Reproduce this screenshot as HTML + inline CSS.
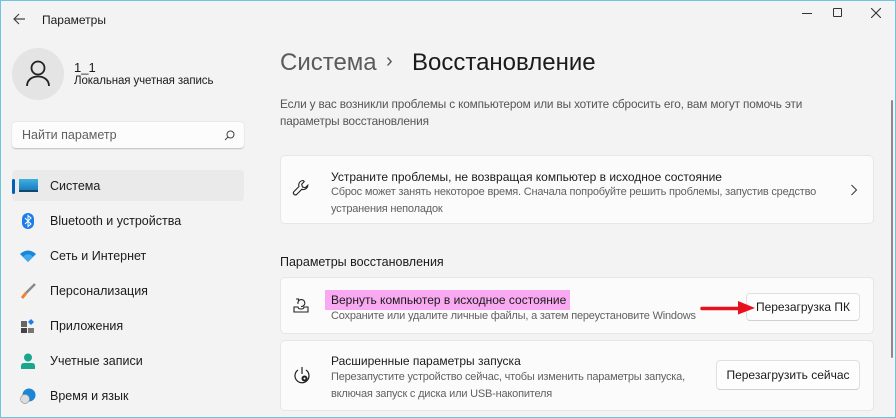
<!DOCTYPE html>
<html><head><meta charset="utf-8"><style>
*{box-sizing:border-box;margin:0;padding:0}
body{width:896px;height:418px;overflow:hidden;background:#f3f3f3;font-family:"Liberation Sans","Noto Sans CJK SC",sans-serif;color:#1b1b1b;position:relative}
.frame{position:absolute;inset:0;border:1px solid #6cc4e0;pointer-events:none}
.abs{position:absolute;white-space:nowrap}
.nav{position:absolute;left:12px;width:232px;height:31px;display:flex;align-items:center;font-size:12.5px}
.nav .ic{width:20px;height:16px;margin-left:6px;margin-right:12px;display:flex;align-items:center;justify-content:center}
.card{position:absolute;left:280px;width:594px;background:#fbfbfb;border:1px solid #e6e6e6;border-radius:5px}
.t{font-size:12px;color:#1b1b1b}
.s{font-size:11px;letter-spacing:-0.2px;color:#616161;line-height:17px;white-space:normal}
.btn{position:absolute;background:#fdfdfd;border:1px solid #e0e0e0;border-bottom-color:#d0d0d0;border-radius:4px;font-size:12px;display:flex;align-items:center;justify-content:center;white-space:nowrap}
</style></head><body>
<svg class="abs" style="left:12px;top:12px" width="14" height="14" viewBox="0 0 14 14"><path d="M13 7H2M7 2L2 7l5 5" stroke="#444" stroke-width="1.2" fill="none"/></svg>
<div class="abs" style="left:42px;top:13px;font-size:12px">Параметры</div>
<div class="abs" style="left:802px;top:13px;width:10px;height:1px;background:#333"></div>
<div class="abs" style="left:833px;top:8px;width:9px;height:9px;border:1px solid #333;border-radius:1px"></div>
<svg class="abs" style="left:871px;top:8px" width="10" height="10"><path d="M0 0L10 10M10 0L0 10" stroke="#333" stroke-width="1.1"/></svg>

<div class="abs" style="left:12px;top:48px;width:52px;height:52px;border-radius:50%;background:#e4e4e4"></div>
<svg class="abs" style="left:25px;top:59px" width="26" height="28" viewBox="0 0 26 28"><circle cx="13" cy="9" r="6.5" stroke="#222" stroke-width="1.8" fill="none"/><path d="M2 27c0-6 5-9.5 11-9.5s11 3.5 11 9.5" stroke="#222" stroke-width="1.8" fill="none"/></svg>
<div class="abs" style="left:74px;top:60px;font-size:13px">1_1</div>
<div class="abs" style="left:74px;top:75px;font-size:11.5px;letter-spacing:-0.1px">Локальная учетная запись</div>

<div class="abs" style="left:12px;top:122px;width:232px;height:27px;background:#fcfcfc;border-radius:4px;border-bottom:1px solid #c8c8c8;box-shadow:0 0 0 1px #e8e8e8"></div>
<div class="abs" style="left:22px;top:128px;font-size:12.5px;color:#5f5f5f">Найти параметр</div>
<svg class="abs" style="left:224px;top:130px" width="11" height="11"><circle cx="6.5" cy="4.5" r="3.5" stroke="#444" fill="none"/><path d="M4 7L1 10" stroke="#444"/></svg>

<div class="nav" style="top:170px;background:#eaeaea;border-radius:4px"><div class="abs" style="left:0;top:9px;width:3px;height:15px;background:#005fb8;border-radius:2px"></div><div class="ic"><div style="width:19px;height:13px;background:linear-gradient(#3fb0e0,#1b7fc0);border-bottom:2px solid #11466e"></div></div>Система</div>
<div class="nav" style="top:205px"><div class="ic"><svg width="12" height="16"><rect width="12" height="16" rx="6" fill="#1a7de8"/><path d="M3 5l6 6-3 2.5V2.5L9 5 3 11" stroke="#fff" fill="none" stroke-width="1"/></svg></div>Bluetooth и устройства</div>
<div class="nav" style="top:240px"><div class="ic"><svg width="16" height="12"><path d="M0 4Q8-3 16 4L8 12Z" fill="#1a86d8"/><path d="M3 6.5Q8 2 13 6.5L8 12Z" fill="#42a8f0"/></svg></div>Сеть и Интернет</div>
<div class="nav" style="top:275px"><div class="ic"><svg width="16" height="16"><path d="M15 1L6 10" stroke="#888" stroke-width="2.5"/><path d="M6 10L2 15" stroke="#f08030" stroke-width="3"/></svg></div>Персонализация</div>
<div class="nav" style="top:310px"><div class="ic"><svg width="16" height="16"><rect x="1" y="3" width="6" height="6" fill="#666"/><rect x="1" y="10" width="6" height="5" fill="#444"/><rect x="8" y="10" width="6" height="5" fill="#777"/><path d="M11 1l3 3-3 3-3-3z" fill="#1a7de8"/></svg></div>Приложения</div>
<div class="nav" style="top:345px"><div class="ic"><svg width="14" height="16"><circle cx="7" cy="4.5" r="4" fill="#19a68c"/><path d="M0 16v-3q0-3 3-3h8q3 0 3 3v3z" fill="#19a68c"/></svg></div>Учетные записи</div>
<div class="nav" style="top:380px"><div class="ic"><svg width="16" height="16"><circle cx="9" cy="7" r="6.5" fill="#1a86d8"/><circle cx="5" cy="11" r="4.5" fill="#ddd" stroke="#999" stroke-width=".7"/></svg></div>Время и язык</div>

<div class="abs" style="left:280px;top:49px;font-size:24px;color:#5b5b5b">Система</div>
<div class="abs" style="left:386px;top:50px;font-size:20px;color:#555">›</div>
<div class="abs" style="left:412px;top:49px;font-size:24px;color:#1b1b1b">Восстановление</div>
<div class="abs" style="left:280px;top:96px;font-size:11.8px;color:#555;line-height:17px;letter-spacing:-0.15px">Если у вас возникли проблемы с компьютером или вы хотите сбросить его, вам могут помочь эти<br>параметры восстановления</div>

<div class="card" style="top:155px;height:69px"></div>
<svg class="abs" style="left:292px;top:179px" width="18" height="18" viewBox="0 0 18 18"><path d="M11 1.5a4.5 4.5 0 0 0-4 6L1.8 12.7a2 2 0 0 0 2.8 2.8L9.8 10.3a4.5 4.5 0 0 0 6-4L13.2 8.8 10.5 8l-.8-2.7L12.2 2.6A4.5 4.5 0 0 0 11 1.5z" stroke="#222" stroke-width="1.1" fill="none"/></svg>
<div class="abs t" style="left:331px;top:170px">Устраните проблемы, не возвращая компьютер в исходное состояние</div>
<div class="abs s" style="left:331px;top:184px">Сброс может занять некоторое время. Сначала попробуйте решить проблемы, запустив средство<br>устранения неполадок</div>
<svg class="abs" style="left:850px;top:184px" width="8" height="12"><path d="M1.5 1l5 5-5 5" stroke="#333" fill="none"/></svg>

<div class="abs" style="left:280px;top:255px;font-size:12.5px">Параметры восстановления</div>

<div class="card" style="top:277px;height:57px"></div>
<svg class="abs" style="left:292px;top:296px" width="18" height="18" viewBox="0 0 18 18"><path d="M2 11v5h14v-5h-4q0 2-3 2t-3-2z" stroke="#222" stroke-width="1.1" fill="none"/><path d="M6 8a3.5 3.5 0 1 1 3 2.5" stroke="#222" stroke-width="1.1" fill="none"/><path d="M4 3h2.5v2.5" stroke="#222" stroke-width="1.1" fill="none"/></svg>
<div class="abs" style="left:325px;top:290px;width:245px;height:20px;background:#f9a9f2"></div>
<div class="abs t" style="left:331px;top:293px">Вернуть компьютер в исходное состояние</div>
<div class="abs s" style="left:331px;top:308px">Сохраните или удалите личные файлы, а затем переустановите Windows</div>
<div class="btn" style="left:746px;top:293px;width:114px;height:28px">Перезагрузка ПК</div>
<svg class="abs" style="left:700px;top:299px" width="56" height="16"><path d="M2 9.5H42" stroke="#e8101a" stroke-width="3.5" stroke-linecap="round"/><path d="M38 2L55 9 38 15.5z" fill="#e8101a"/></svg>

<div class="card" style="top:340px;height:71px"></div>
<svg class="abs" style="left:292px;top:366px" width="20" height="20" viewBox="0 0 20 20"><path d="M6 4a7 7 0 1 0 8 0" stroke="#222" stroke-width="1.2" fill="none"/><path d="M10 1v7" stroke="#222" stroke-width="1.2"/><circle cx="12.5" cy="12.5" r="3" fill="#222"/><circle cx="12.5" cy="12.5" r="1" fill="#fff"/></svg>
<div class="abs t" style="left:331px;top:354px">Расширенные параметры запуска</div>
<div class="abs s" style="left:331px;top:369px">Перезапустите устройство сейчас, чтобы изменить параметры запуска,<br>включая запуск с диска или USB-накопителя</div>
<div class="btn" style="left:716px;top:360px;width:144px;height:30px">Перезагрузить сейчас</div>

<div class="abs" style="left:891px;top:100px;width:2px;height:258px;background:#8a8a8a;border-radius:1px"></div>
<div class="frame"></div>
</body></html>
